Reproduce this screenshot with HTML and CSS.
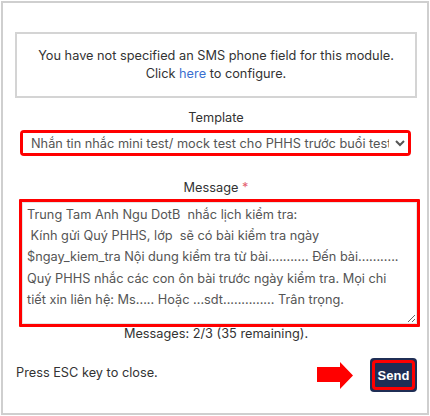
FILE: index.html
```html
<!DOCTYPE html>
<html lang="vi">
<head>
<meta charset="utf-8">
<link rel="stylesheet" href="styles.css">
</head>
<body>
<div class="modal">
  <div class="notice">
    <p>You have not specified an SMS phone field for this module.</p>
    <p>Click <a href="#">here</a> to configure.</p>
  </div>
  <div class="field field-template">
    <label class="label">Template</label>
    <div class="hl hl-select">
      <select class="select">
        <option>Nhắn tin nhắc mini test/ mock test cho PHHS trước buổi test</option>
      </select>
    </div>
  </div>
  <div class="field field-message">
    <label class="label">Message <span class="req">*</span></label>
    <div class="hl hl-text">
      <textarea class="textarea">Trung Tam Anh Ngu DotB  nhắc lịch kiểm tra:
 Kính gửi Quý PHHS, lớp  sẽ có bài kiểm tra ngày
$ngay_kiem_tra Nội dung kiểm tra từ bài........... Đến bài...........
Quý PHHS nhắc các con ôn bài trước ngày kiểm tra. Mọi chi
tiết xin liên hệ: Ms..... Hoặc ...sdt.............. Trân trọng.</textarea>
    </div>
    <div class="count">Messages: 2/3 (35 remaining).</div>
  </div>
  <div class="footer">
    <span class="esc">Press ESC key to close.</span>
    <div class="actions">
      <svg class="arrow" width="37" height="27" viewBox="0 0 37 27"><polygon points="0,5 23,5 23,0 36,13.5 23,27 23,20 0,20" fill="#f00"/></svg>
      <button class="send"><span>Send</span></button>
    </div>
  </div>
</div>
</body>
</html>
```

FILE: styles.css
```css
* { box-sizing: border-box; }
html, body { margin: 0; padding: 0; background: #fff; }
body {
  font-family: "Inter", "Liberation Sans", sans-serif;
  font-size: 12.75px;
  color: #333;
}
.modal {
  margin: 1px;
  width: 428px;
  height: 414px;
  border: 2px solid #cfcfcf;
  padding: 29px 10px 0 12px;
  display: flex;
  flex-direction: column;
}
.notice {
  height: 66px;
  border: 2px solid #d4d4d4;
  display: flex;
  flex-direction: column;
  justify-content: center;
  align-items: center;
  text-align: center;
  line-height: 18px;
}
.notice p { margin: 0; }
.notice a { color: #3a6fd0; text-decoration: none; }
.field { display: flex; flex-direction: column; align-items: center; }
.field-template { margin-top: 11px; }
.label { line-height: 18px; }
.req { color: #e4606d; }
.hl { border: 3px solid #f00; border-radius: 4px; }
.hl-select {
  margin-top: 3px;
  align-self: flex-start;
  margin-left: 5px;
  width: 391px;
  height: 26px;
  padding: 0;
}
.select {
  width: 100%;
  height: 100%;
  border: none;
  outline: none;
  font: inherit;
  color: #555;
  background: #fff;
  padding: 0 3px 0 4px;
}
.field-message { margin-top: 23px; }
.hl-text {
  margin-top: 2px;
  align-self: flex-start;
  margin-left: 4px;
  width: 401px;
  height: 128px;
  border-radius: 1px;
}
.textarea {
  display: block;
  width: 100%;
  height: 100%;
  border: 1px solid #e4e4e4;
  font: inherit;
  color: #555;
  line-height: 21.2px;
  padding: 1px 4px;
  resize: vertical;
  overflow: hidden;
  outline: none;
  white-space: pre;
}
.count { line-height: 16px; margin-top: -1px; }
.footer {
  margin-top: 16px;
  display: flex;
  align-items: center;
  justify-content: space-between;
  padding-left: 1px;
}
.esc { position: relative; top: -3px; }
.actions { display: flex; align-items: center; gap: 16px; }
.arrow { display: block; }
.send {
  width: 47px;
  height: 34px;
  background: #1f2e55;
  border: none;
  border-radius: 4px;
  padding: 2px;
  display: flex;
}
.send span {
  flex: 1;
  border: 3px solid #f00;
  border-radius: 4px;
  color: #fff;
  font-weight: bold;
  font-family: "Liberation Sans", sans-serif;
  font-size: 13px;
  display: flex;
  align-items: center;
  justify-content: center;
}
```
